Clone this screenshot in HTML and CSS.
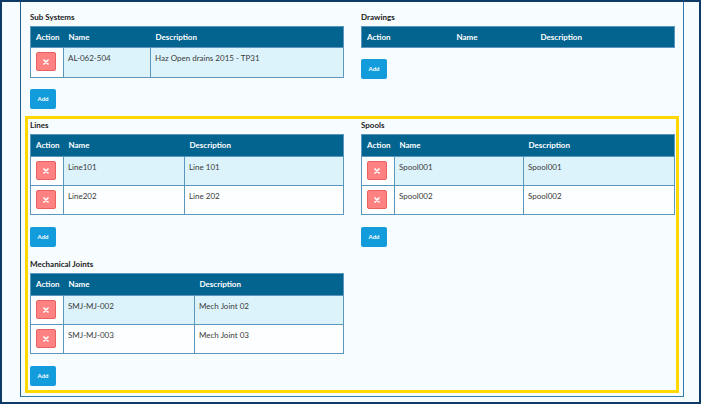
FILE: index.html
```html
<!DOCTYPE html>
<html>
<head>
<meta charset="utf-8">
<link rel="stylesheet" href="styles.css">
</head>
<body>
<div class="frame">
  <div class="panel">
    <div class="cols top">
      <section class="block">
        <div class="title">Sub Systems</div>
        <table class="grid">
          <colgroup><col class="c-act"><col class="c-n87"><col></colgroup>
          <thead><tr><th>Action</th><th>Name</th><th>Description</th></tr></thead>
          <tbody>
            <tr class="odd"><td class="act"><button class="del"><svg viewBox="0 0 6 6" width="6" height="6"><path d="M1 1L5 5M5 1L1 5" stroke="#fff" stroke-width="1.7" stroke-linecap="round"/></svg></button></td><td>AL-062-504</td><td>Haz Open drains 2015 - TP31</td></tr>
          </tbody>
        </table>
        <button class="add">Add</button>
      </section>
      <section class="block">
        <div class="title">Drawings</div>
        <table class="grid">
          <colgroup><col class="c-a90"><col class="c-n84"><col></colgroup>
          <thead><tr><th>Action</th><th>Name</th><th>Description</th></tr></thead>
          <tbody></tbody>
        </table>
        <button class="add">Add</button>
      </section>
    </div>
    <div class="highlight">
      <div class="cols">
        <div class="stack">
          <section class="block">
            <div class="title">Lines</div>
            <table class="grid tall">
              <colgroup><col class="c-act"><col class="c-n121"><col></colgroup>
              <thead><tr><th>Action</th><th>Name</th><th>Description</th></tr></thead>
              <tbody>
                <tr class="odd"><td class="act"><button class="del"><svg viewBox="0 0 6 6" width="6" height="6"><path d="M1 1L5 5M5 1L1 5" stroke="#fff" stroke-width="1.7" stroke-linecap="round"/></svg></button></td><td>Line101</td><td>Line 101</td></tr>
                <tr><td class="act"><button class="del"><svg viewBox="0 0 6 6" width="6" height="6"><path d="M1 1L5 5M5 1L1 5" stroke="#fff" stroke-width="1.7" stroke-linecap="round"/></svg></button></td><td>Line202</td><td>Line 202</td></tr>
              </tbody>
            </table>
            <button class="add">Add</button>
          </section>
          <section class="block next">
            <div class="title">Mechanical Joints</div>
            <table class="grid tall">
              <colgroup><col class="c-act"><col class="c-n131"><col></colgroup>
              <thead><tr><th>Action</th><th>Name</th><th>Description</th></tr></thead>
              <tbody>
                <tr class="odd"><td class="act"><button class="del"><svg viewBox="0 0 6 6" width="6" height="6"><path d="M1 1L5 5M5 1L1 5" stroke="#fff" stroke-width="1.7" stroke-linecap="round"/></svg></button></td><td>SMJ-MJ-002</td><td>Mech Joint 02</td></tr>
                <tr><td class="act"><button class="del"><svg viewBox="0 0 6 6" width="6" height="6"><path d="M1 1L5 5M5 1L1 5" stroke="#fff" stroke-width="1.7" stroke-linecap="round"/></svg></button></td><td>SMJ-MJ-003</td><td>Mech Joint 03</td></tr>
              </tbody>
            </table>
            <button class="add">Add</button>
          </section>
        </div>
        <div class="stack">
          <section class="block">
            <div class="title">Spools</div>
            <table class="grid tall">
              <colgroup><col class="c-act"><col class="c-n129"><col></colgroup>
              <thead><tr><th>Action</th><th>Name</th><th>Description</th></tr></thead>
              <tbody>
                <tr class="odd"><td class="act"><button class="del"><svg viewBox="0 0 6 6" width="6" height="6"><path d="M1 1L5 5M5 1L1 5" stroke="#fff" stroke-width="1.7" stroke-linecap="round"/></svg></button></td><td>Spool001</td><td>Spool001</td></tr>
                <tr><td class="act"><button class="del"><svg viewBox="0 0 6 6" width="6" height="6"><path d="M1 1L5 5M5 1L1 5" stroke="#fff" stroke-width="1.7" stroke-linecap="round"/></svg></button></td><td>Spool002</td><td>Spool002</td></tr>
              </tbody>
            </table>
            <button class="add">Add</button>
          </section>
        </div>
      </div>
    </div>
  </div>
</div>
</body>
</html>
```

FILE: styles.css
```css
* { box-sizing: border-box; }
html, body { margin: 0; padding: 0; }
body {
  font-family: Lato, "Open Sans", sans-serif;
  font-size: 8px;
  color: #333;
  background: #f7fcff;
}
.frame {
  width: 701px;
  height: 404px;
  border: 2px solid #0d3a66;
  display: flex;
  flex-direction: column;
  overflow: hidden;
  background: #f7fcff;
}
.panel {
  flex: 1;
  margin: 0 15px 5px 18px;
  border: 1px solid #2d7cb0;
  border-top: none;
  border-left-color: #1f5f8e;
  padding-top: 10px;
  min-height: 0;
}
.cols {
  display: grid;
  grid-template-columns: 314px 314px;
  column-gap: 17px;
}
.top {
  padding: 0 8px 0 9px;
  margin-bottom: 7px;
}
.highlight {
  margin: 0 4px;
  border: 3px solid #ffd800;
  padding: 1px 1px 4px 2px;
}
.block { display: flex; flex-direction: column; align-items: flex-start; }
.block.next { margin-top: 12px; }
.title {
  font-weight: 700;
  font-size: 8px;
  line-height: 11px;
  color: #1a1a1a;
  margin-bottom: 3px;
}
.grid {
  width: 314px;
  table-layout: fixed;
  border-collapse: collapse;
  border: 1px solid #5b97bd;
}
.c-act { width: 33px; }
.c-a90 { width: 90px; }
.c-n84 { width: 84px; }
.c-n87 { width: 87px; }
.c-n121 { width: 121px; }
.c-n129 { width: 129px; }
.c-n131 { width: 131px; }
.grid th {
  background: #03648f;
  color: #fff;
  font-weight: 700;
  text-align: left;
  height: 21px;
  padding: 0 4px 0 5px;
  vertical-align: middle;
  line-height: 11px;
}
.grid.tall th { height: 22px; }
.grid td {
  border: 1px solid #5b97bd;
  height: 30px;
  padding: 5px 4px 0 4px;
  vertical-align: top;
  line-height: 11px;
  color: #3a3a3a;
  background: #fcfeff;
}
.grid.tall td { height: 29px; }
.grid tr.odd td { background: #ddf3fc; }
.grid td.act { padding: 4px 0 0 5px; background: #fcfeff; }
.grid tr.odd td.act { background: #fcfeff; }
.del {
  width: 20px;
  height: 19px;
  padding: 0;
  border: 1px solid #ea5f5f;
  border-radius: 2px;
  background: #ff8282;
  display: flex;
  align-items: center;
  justify-content: center;
}
.del svg { display: block; }
.add {
  margin-top: 11px;
  width: 26px;
  height: 20px;
  padding: 0;
  border: none;
  border-radius: 2px;
  background: #139cdb;
  color: #fff;
  font-family: Lato, sans-serif;
  font-weight: 700;
  font-size: 6px;
  line-height: 20px;
  text-align: center;
}
.grid.tall + .add { margin-top: 12px; }
```
